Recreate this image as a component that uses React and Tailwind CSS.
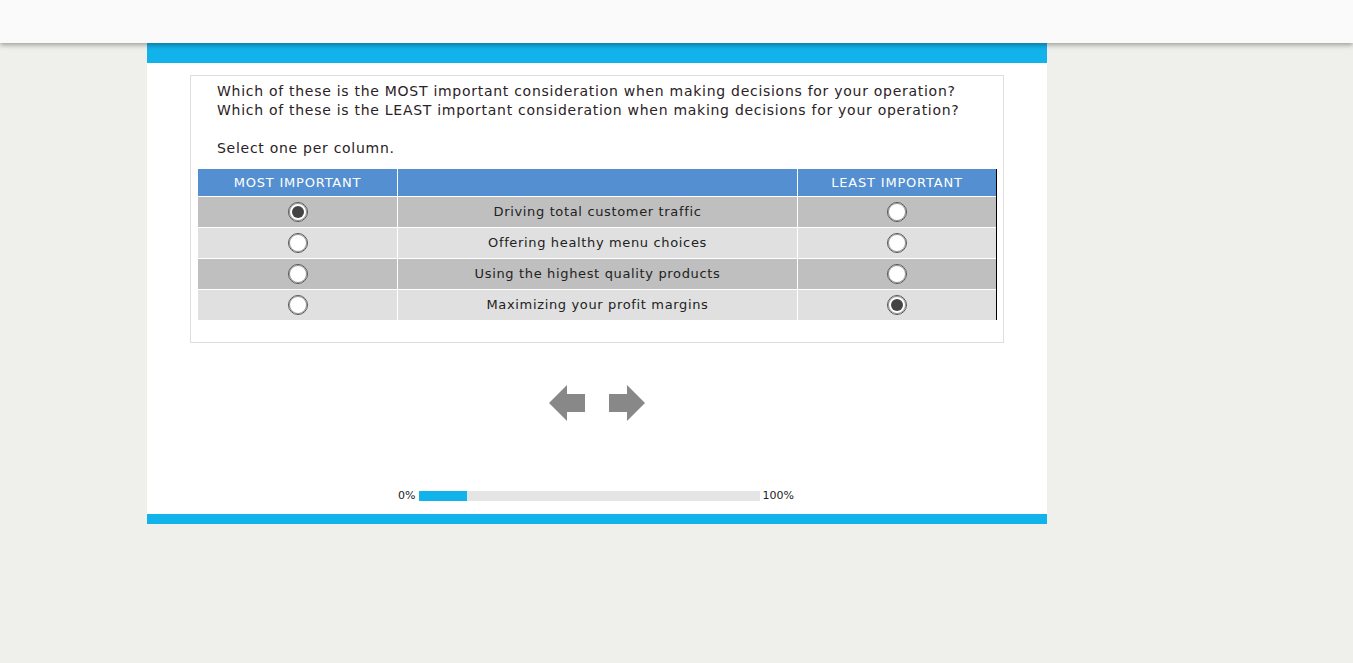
import React from "react";

const rows = [
  { label: "Driving total customer traffic", most: true, least: false },
  { label: "Offering healthy menu choices", most: false, least: false },
  { label: "Using the highest quality products", most: false, least: false },
  { label: "Maximizing your profit margins", most: false, least: true },
];

const Radio = ({ checked }) => (
  <span className="flex h-[20px] w-[20px] items-center justify-center rounded-full border border-[#555] bg-white shadow-[inset_0_0_0_1px_#999]">
    {checked && <span className="h-[12px] w-[12px] rounded-full bg-[#444]"></span>}
  </span>
);

const Arrow = ({ dir }) => (
  <svg width="37" height="36" viewBox="0 0 37 36">
    {dir === "left" ? (
      <polygon points="0,18 18,0 18,9 36,9 36,27 18,27 18,36" fill="#888" />
    ) : (
      <polygon points="37,18 19,0 19,9 1,9 1,27 19,27 19,36" fill="#888" />
    )}
  </svg>
);

export default function App() {
  return (
    <div className="min-h-screen bg-[#efefeb] font-['DejaVu_Sans',sans-serif] text-[#333]">
      <div className="relative z-10 h-[43px] bg-[#fafafa] shadow-[0_2px_5px_rgba(0,0,0,0.35)]"></div>
      <div className="ml-[147px] w-[900px]">
        <div className="h-[20px] bg-[#12b2ea]"></div>
        <div className="flex h-[451px] flex-col bg-white pt-[12px]">
          <div className="ml-[43px] h-[268px] w-[814px] border border-[#dedede] px-[7px] pt-[6px]">
            <div className="pl-[19px] text-[14px] leading-[19px] tracking-[0.72px] text-[#2a2226]">
              <p>Which of these is the MOST important consideration when making decisions for your operation?</p>
              <p>Which of these is the LEAST important consideration when making decisions for your operation?</p>
              <p className="mt-[19px]">Select one per column.</p>
            </div>
            <div className="mt-[11px] w-[799px] border-r border-black">
              <div className="grid grid-cols-[199px_1px_399px_1px_198px] bg-[#538fd1] text-[13px] tracking-[0.8px] text-white">
                <div className="flex h-[27px] items-center justify-center">MOST IMPORTANT</div>
                <div className="bg-white"></div>
                <div></div>
                <div className="bg-white"></div>
                <div className="flex items-center justify-center">LEAST IMPORTANT</div>
              </div>
              {rows.map((r, i) => (
                <div
                  key={r.label}
                  className={`mt-px grid grid-cols-[199px_1px_399px_1px_198px] text-[13px] text-[#222] ${
                    i % 2 === 0 ? "bg-[#bfbfbf]" : "bg-[#e0e0e0]"
                  }`}
                >
                  <div className="flex h-[30px] items-center justify-center">
                    <Radio checked={r.most} />
                  </div>
                  <div className="bg-white"></div>
                  <div className="flex items-center justify-center tracking-[0.65px]">{r.label}</div>
                  <div className="bg-white"></div>
                  <div className="flex items-center justify-center">
                    <Radio checked={r.least} />
                  </div>
                </div>
              ))}
            </div>
          </div>
          <div className="mt-[42px] flex justify-center gap-[22px] pr-[1px]">
            <Arrow dir="left" />
            <Arrow dir="right" />
          </div>
          <div className="mt-[67px] flex items-center justify-center pr-[2px] text-[11px] text-[#222]">
            <span className="mr-[3px]">0%</span>
            <div className="h-[10px] w-[341px] bg-[#e5e5e5]">
              <div className="h-full w-[48px] bg-[#12b2ea]"></div>
            </div>
            <span className="ml-[3px]">100%</span>
          </div>
        </div>
        <div className="h-[10px] bg-[#12b2ea]"></div>
      </div>
    </div>
  );
}
